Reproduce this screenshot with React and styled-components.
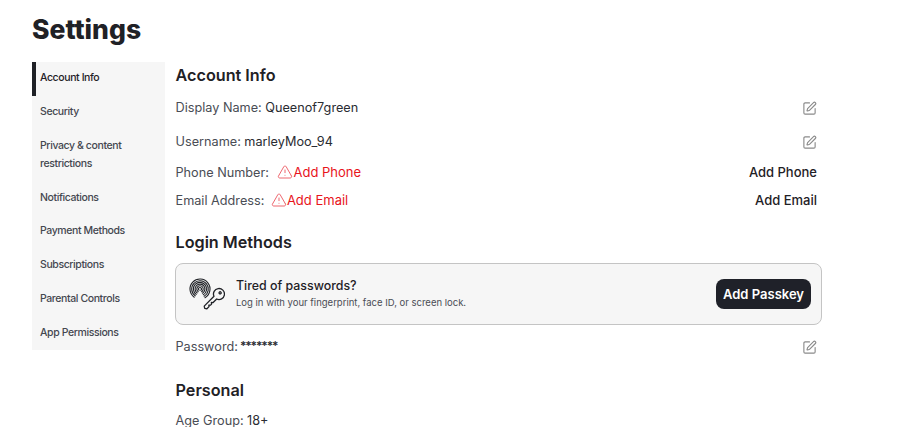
import React from 'react'
import styled, { createGlobalStyle } from 'styled-components'
import { SquarePen, TriangleAlert } from 'lucide-react'

const GlobalStyle = createGlobalStyle`
  html, body {
    margin: 0;
    height: 427px;
    overflow: hidden;
    background: #fff;
    font-family: Inter, "Liberation Sans", sans-serif;
  }
`

const menu = [
  'Account Info',
  'Security',
  'Privacy & content restrictions',
  'Notifications',
  'Payment Methods',
  'Subscriptions',
  'Parental Controls',
  'App Permissions',
]

// fingerprint rings, open at the lower left
const rings = [10, 8.3, 6.6, 4.9, 3.2, 1.5]

const ringPath = r => {
  const cx = 11
  const cy = 13
  const start = (125 * Math.PI) / 180
  const end = (60 * Math.PI) / 180
  const x1 = cx + r * Math.cos(start)
  const y1 = cy + r * Math.sin(start)
  const x2 = cx + r * Math.cos(end)
  const y2 = cy + r * Math.sin(end)
  return `M${x1} ${y1}A${r} ${r} 0 1 1 ${x2} ${y2}`
}

const PasskeyIcon = () => (
  <svg width="36" height="36" viewBox="0 0 36 36" fill="none" stroke="#1f2126" strokeLinecap="round">
    <g strokeWidth="1.1">
      {rings.map(r => <path key={r} d={ringPath(r)} />)}
    </g>
    <g transform="translate(30 18) rotate(45)" strokeWidth="1.3" strokeLinejoin="round">
      <path d="M-1.9 5.2V19L0 20.2 1.9 19v-3L.6 15l1.3-1.2v-1.4L.6 11.4l1.3-1.2V5.2A5.5 5.5 0 1 0-1.9 5.2z" />
      <circle cx="0" cy="-1.6" r="1.1" />
    </g>
  </svg>
)

const App = () => {
  return (
    <Page>
      <GlobalStyle />
      <Title>Settings</Title>
      <Layout>
        <Sidebar>
          {menu.map((item, i) => (
            <MenuItem key={item} $active={i === 0}>{item}</MenuItem>
          ))}
        </Sidebar>
        <Content>
          <Heading>Account Info</Heading>
          <Row $height={34}>
            <Label>Display Name:<Value>Queenof7green</Value></Label>
            <EditButton><SquarePen size={15} strokeWidth={1.8} /></EditButton>
          </Row>
          <Row $height={34}>
            <Label>Username:<Value>marleyMoo_94</Value></Label>
            <EditButton><SquarePen size={15} strokeWidth={1.8} /></EditButton>
          </Row>
          <Row $height={28}>
            <Label>
              Phone Number:
              <Warning $gap={5}><TriangleAlert size={16} strokeWidth={1.4} />Add Phone</Warning>
            </Label>
            <ActionLink>Add Phone</ActionLink>
          </Row>
          <Row $height={28}>
            <Label>
              Email Address:
              <Warning $gap={3}><TriangleAlert size={16} strokeWidth={1.4} />Add Email</Warning>
            </Label>
            <ActionLink>Add Email</ActionLink>
          </Row>

          <SubHeading $top={15} $bottom={8}>Login Methods</SubHeading>
          <PasskeyCard>
            <PasskeyIcon />
            <PasskeyText>
              <PasskeyTitle>Tired of passwords?</PasskeyTitle>
              <PasskeyHint>Log in with your fingerprint, face ID, or screen lock.</PasskeyHint>
            </PasskeyText>
            <PasskeyButton>Add Passkey</PasskeyButton>
          </PasskeyCard>
          <Row $height={43}>
            <Label>Password:<Stars>*******</Stars></Label>
            <EditButton><SquarePen size={15} strokeWidth={1.8} /></EditButton>
          </Row>

          <SubHeading $top={9} $bottom={3}>Personal</SubHeading>
          <Row $height={28}>
            <Label>Age Group:<Value>18+</Value></Label>
          </Row>
        </Content>
      </Layout>
    </Page>
  )
}

export default App

const Page = styled.div`
  padding: 12px 32px 0;
  width: 790px;
`

const Title = styled.h1`
  margin: 0 0 16px;
  font-size: 26.5px;
  line-height: 34px;
  font-weight: 800;
  color: #1f2126;
`

const Layout = styled.div`
  display: flex;
  align-items: flex-start;
  gap: 10px;
`

const Sidebar = styled.nav`
  width: 133px;
  flex-shrink: 0;
  background: #f6f6f6;
`

const MenuItem = styled.div`
  box-sizing: border-box;
  padding: 7.4px 8px 8.6px ${p => (p.$active ? '4px' : '8px')};
  border-left: ${p => (p.$active ? '4px solid #1f2126' : 'none')};
  font-size: 10.5px;
  font-weight: 500;
  line-height: 17.8px;
  letter-spacing: -0.4px;
  color: ${p => (p.$active ? '#1f2126' : '#44474f')};
`

const Content = styled.main`
  flex: 1;
  min-width: 0;
`

const Heading = styled.h2`
  margin: 0 0 2px;
  padding-left: 0.5px;
  font-size: 16.2px;
  font-weight: 600;
  line-height: 26px;
  color: #1f2126;
`

const SubHeading = styled(Heading)`
  margin-top: ${p => p.$top}px;
  margin-bottom: ${p => p.$bottom}px;
`

const Row = styled.div`
  display: flex;
  align-items: center;
  justify-content: space-between;
  height: ${p => p.$height}px;
  padding: 0 5px 0 0.5px;
`

const Label = styled.div`
  display: flex;
  align-items: center;
  gap: 3.5px;
  font-size: 12.7px;
  color: #4a4d55;
`

const Value = styled.span`
  font-size: 12.7px;
  color: #2a2c32;
`

const Stars = styled(Value)`
  margin-left: -1.5px;
  font-size: 12px;
  font-weight: 600;
  letter-spacing: -1.1px;
  transform: translateY(-1px);
`

const Warning = styled.span`
  display: inline-flex;
  align-items: center;
  margin-left: ${p => p.$gap}px;
  font-size: 13px;
  color: #e8141c;
  svg {
    color: #ec5a63;
  }
`

const ActionLink = styled.span`
  font-size: 13px;
  font-weight: 500;
  color: #1f2126;
`

const EditButton = styled.span`
  display: flex;
  padding-top: 2px;
  color: #8a8a8a;
`

const PasskeyCard = styled.div`
  box-sizing: border-box;
  display: flex;
  align-items: center;
  height: 62px;
  padding: 0 10px 0 13px;
  background: #f6f6f6;
  border: 1px solid #c4c4c4;
  border-radius: 8px;
`

const PasskeyText = styled.div`
  flex: 1;
  margin-left: 11px;
`

const PasskeyTitle = styled.div`
  margin-top: -1px;
  margin-bottom: 1px;
  font-size: 12.4px;
  font-weight: 500;
  line-height: 18px;
  color: #1f2126;
`

const PasskeyHint = styled.div`
  font-size: 9.5px;
  line-height: 14px;
  color: #4a4d55;
`

const PasskeyButton = styled.button`
  width: 95px;
  height: 30px;
  padding: 0;
  border: none;
  border-radius: 8px;
  background: #1f2129;
  color: #fff;
  font-family: inherit;
  font-size: 13px;
  font-weight: 600;
`
